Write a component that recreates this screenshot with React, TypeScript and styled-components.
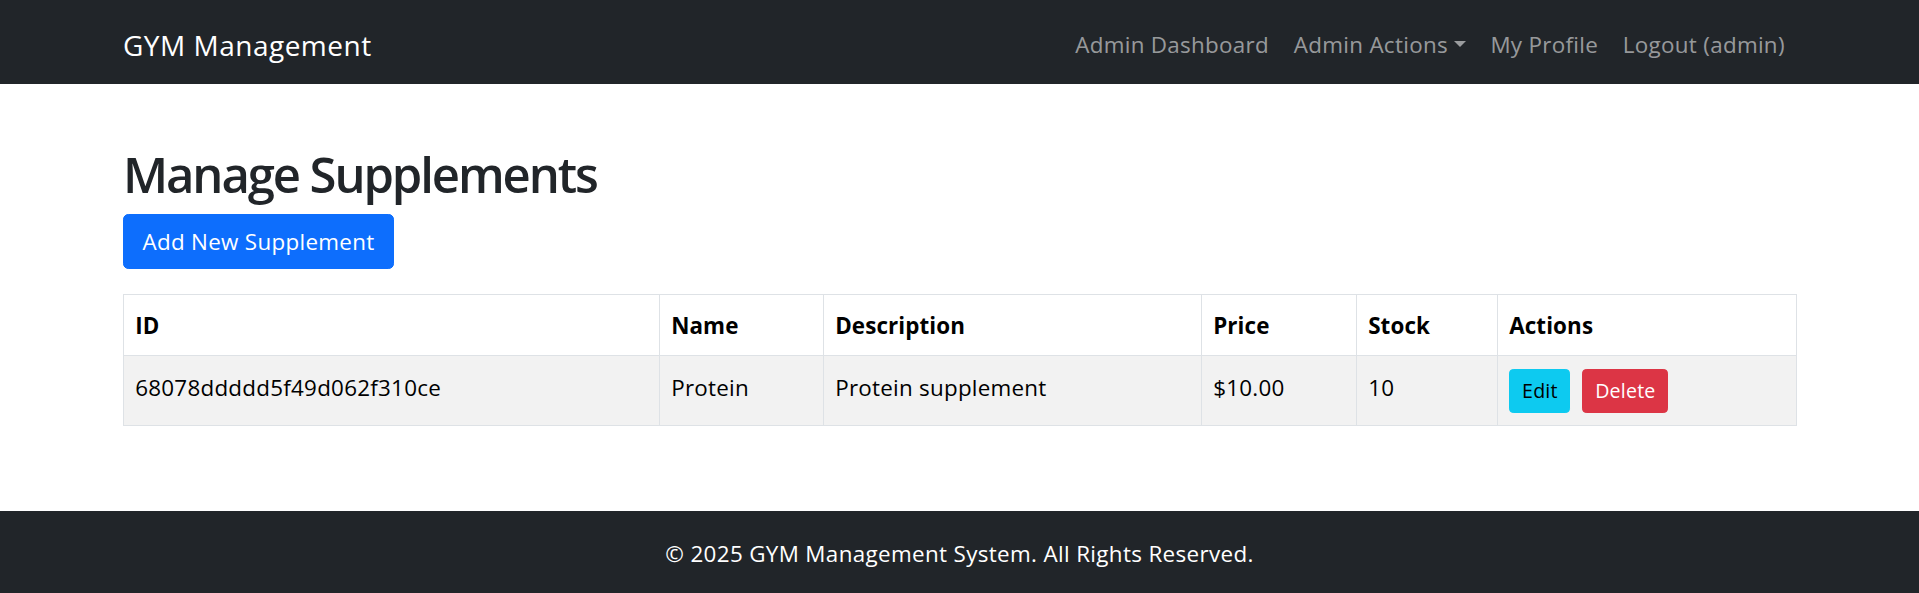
import React from "react";
import styled, { createGlobalStyle } from "styled-components";

const GlobalStyle = createGlobalStyle`
  * { box-sizing: border-box; }
  body {
    margin: 0;
    font-family: "Open Sans", "Segoe UI", sans-serif;
    font-size: 22.4px;
    line-height: 1.5;
    color: #212529;
    background: #fff;
  }
`;

const NavBar = styled.header`
  background: #212529;
  height: 84px;
  padding-top: 5px;
`;

const NavInner = styled.div`
  width: 1673px;
  height: 100%;
  margin: 0 auto;
  display: flex;
  align-items: center;
  justify-content: space-between;
`;

const Brand = styled.a`
  font-size: 28px;
  line-height: 42px;
  color: #fff;
  text-decoration: none;
  letter-spacing: 0.5px;
`;

const NavList = styled.nav`
  display: flex;
  align-items: center;
`;

const NavLink = styled.a<{ $caret?: boolean }>`
  padding: 0 12.4px;
  line-height: 33.6px;
  color: rgba(255, 255, 255, 0.55);
  text-decoration: none;
  white-space: nowrap;
  letter-spacing: 0.3px;
  &:last-child {
    padding-right: 11.2px;
  }
  &::after {
    content: ${(p) => (p.$caret ? '""' : "none")};
    display: inline-block;
    margin-left: 5.7px;
    vertical-align: 5.7px;
    border-top: 6.7px solid;
    border-right: 6.7px solid transparent;
    border-left: 6.7px solid transparent;
    border-bottom: 0;
  }
`;

const Main = styled.main`
  width: 1673px;
  margin: 0 auto;
  padding: 60px 0 85px;
`;

const Title = styled.h1`
  margin: 0 0 10px;
  font-size: 49px;
  line-height: 60px;
  font-weight: 600;
  color: #212529;
  letter-spacing: -2.1px;
`;

const PrimaryButton = styled.button`
  display: block;
  width: 271px;
  height: 55.3px;
  padding: 0;
  border: 1.4px solid #0d6efd;
  border-radius: 5.25px;
  background: #0d6efd;
  color: #fff;
  font-family: inherit;
  font-size: 22.4px;
  line-height: 33.6px;
  letter-spacing: 0.3px;
`;

const Table = styled.table`
  width: 1673px;
  margin-top: 25px;
  border-collapse: collapse;
  table-layout: fixed;
  color: #000;
`;

const Col = styled.col<{ $w: number }>`
  width: ${(p) => p.$w}px;
`;

const Th = styled.th`
  border: 1px solid #dee2e6;
  padding: 13.8px 11.2px 12.6px;
  line-height: 33.6px;
  text-align: left;
  font-weight: 700;
  background: #fff;
  letter-spacing: 0.1px;
`;

const Td = styled.td`
  border: 1px solid #dee2e6;
  padding: 14.5px 11.2px;
  line-height: 33.6px;
  vertical-align: top;
  background: #f2f2f2;
  letter-spacing: 0.25px;
`;

const ActionsTd = styled(Td)`
  padding: 12.3px 11.4px;
`;

const ActionGroup = styled.div`
  display: flex;
  gap: 12px;
`;

const SmallButton = styled.button<{ $variant: "info" | "danger"; $w: number }>`
  width: ${(p) => p.$w}px;
  height: 44.4px;
  padding: 0;
  border-radius: 4.2px;
  font-family: inherit;
  font-size: 19.6px;
  line-height: 29.4px;
  letter-spacing: 0.2px;
  border: 1.4px solid ${(p) => (p.$variant === "info" ? "#0dcaf0" : "#dc3545")};
  background: ${(p) => (p.$variant === "info" ? "#0dcaf0" : "#dc3545")};
  color: ${(p) => (p.$variant === "info" ? "#000" : "#fff")};
`;

const Footer = styled.footer`
  background: #212529;
  color: #fff;
  text-align: center;
  padding: 25.5px 0;
  line-height: 33.6px;
  letter-spacing: 0.35px;
`;

const columns = [
  { label: "ID", w: 536 },
  { label: "Name", w: 164 },
  { label: "Description", w: 378 },
  { label: "Price", w: 155 },
  { label: "Stock", w: 141 },
  { label: "Actions", w: 299 },
];

const supplements = [
  {
    id: "68078ddddd5f49d062f310ce",
    name: "Protein",
    description: "Protein supplement",
    price: "$10.00",
    stock: 10,
  },
];

export default function App() {
  return (
    <>
      <GlobalStyle />
      <NavBar>
        <NavInner>
          <Brand href="#">GYM Management</Brand>
          <NavList>
            <NavLink href="#">Admin Dashboard</NavLink>
            <NavLink href="#" $caret>
              Admin Actions
            </NavLink>
            <NavLink href="#">My Profile</NavLink>
            <NavLink href="#">Logout (admin)</NavLink>
          </NavList>
        </NavInner>
      </NavBar>
      <Main>
        <Title>Manage Supplements</Title>
        <PrimaryButton>Add New Supplement</PrimaryButton>
        <Table>
          <colgroup>
            {columns.map((c) => (
              <Col key={c.label} $w={c.w} />
            ))}
          </colgroup>
          <thead>
            <tr>
              {columns.map((c) => (
                <Th key={c.label}>{c.label}</Th>
              ))}
            </tr>
          </thead>
          <tbody>
            {supplements.map((s) => (
              <tr key={s.id}>
                <Td>{s.id}</Td>
                <Td>{s.name}</Td>
                <Td>{s.description}</Td>
                <Td>{s.price}</Td>
                <Td>{s.stock}</Td>
                <ActionsTd>
                  <ActionGroup>
                    <SmallButton $variant="info" $w={61}>
                      Edit
                    </SmallButton>
                    <SmallButton $variant="danger" $w={86}>
                      Delete
                    </SmallButton>
                  </ActionGroup>
                </ActionsTd>
              </tr>
            ))}
          </tbody>
        </Table>
      </Main>
      <Footer>© 2025 GYM Management System. All Rights Reserved.</Footer>
    </>
  );
}
